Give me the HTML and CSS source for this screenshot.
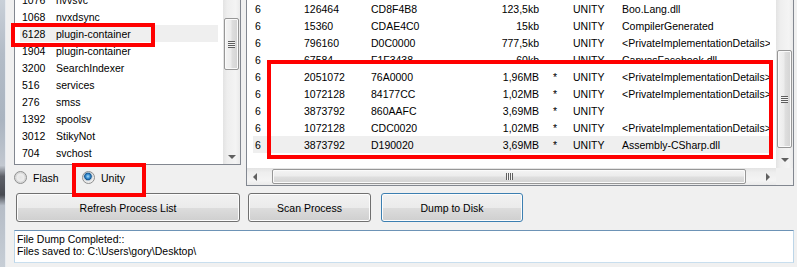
FILE: index.html
```html
<!DOCTYPE html>
<html lang="en">
  <head>
    <meta charset="UTF-8" />
    <title>Unity Dumper</title>
    <link rel="stylesheet" href="styles.css">
  </head>
  <body>
    <div class="desk">
      <!-- edge of the window behind -->
      <div class="backdrop"></div>

      <div class="form">
        <div class="panes">
          <div class="left-pane">
            <div class="proc-list">
              <div class="rows">
                <div class="row"><span class="pid">1076</span><span>nvvsvc</span></div>
                <div class="row"><span class="pid">1068</span><span>nvxdsync</span></div>
                <div class="row sel"><span class="pid">6128</span><span>plugin-container</span></div>
                <div class="row"><span class="pid">1904</span><span>plugin-container</span></div>
                <div class="row"><span class="pid">3200</span><span>SearchIndexer</span></div>
                <div class="row"><span class="pid">516</span><span>services</span></div>
                <div class="row"><span class="pid">276</span><span>smss</span></div>
                <div class="row"><span class="pid">1392</span><span>spoolsv</span></div>
                <div class="row"><span class="pid">3012</span><span>StikyNot</span></div>
                <div class="row"><span class="pid">704</span><span>svchost</span></div>
              </div>
              <div class="vscroll proc-scroll">
                <div class="thumb"><span class="grip"></span></div>
                <span class="arrow down"></span>
              </div>
            </div>

            <div class="radios">
              <label class="radio"><span class="dot"></span>Flash</label>
              <label class="radio checked"><span class="dot"></span>Unity</label>
            </div>
          </div>

          <div class="mod-list">
            <div class="rows">
              <div class="mrow"><span>6</span><span>126464</span><span>CD8F4B8</span><span class="size">123,5kb</span><span></span><span>UNITY</span><span>Boo.Lang.dll</span></div>
              <div class="mrow"><span>6</span><span>15360</span><span>CDAE4C0</span><span class="size">15kb</span><span></span><span>UNITY</span><span>CompilerGenerated</span></div>
              <div class="mrow"><span>6</span><span>796160</span><span>D0C0000</span><span class="size">777,5kb</span><span></span><span>UNITY</span><span>&lt;PrivateImplementationDetails&gt;</span></div>
              <div class="mrow"><span>6</span><span>67584</span><span>F1F3438</span><span class="size">60kb</span><span></span><span>UNITY</span><span>CanvasFacebook.dll</span></div>
              <div class="mrow"><span>6</span><span>2051072</span><span>76A0000</span><span class="size">1,96MB</span><span class="star">*</span><span>UNITY</span><span>&lt;PrivateImplementationDetails&gt;</span></div>
              <div class="mrow"><span>6</span><span>1072128</span><span>84177CC</span><span class="size">1,02MB</span><span class="star">*</span><span>UNITY</span><span>&lt;PrivateImplementationDetails&gt;</span></div>
              <div class="mrow"><span>6</span><span>3873792</span><span>860AAFC</span><span class="size">3,69MB</span><span class="star">*</span><span>UNITY</span><span></span></div>
              <div class="mrow"><span>6</span><span>1072128</span><span>CDC0020</span><span class="size">1,02MB</span><span class="star">*</span><span>UNITY</span><span>&lt;PrivateImplementationDetails&gt;</span></div>
              <div class="mrow sel"><span>6</span><span>3873792</span><span>D190020</span><span class="size">3,69MB</span><span class="star">*</span><span>UNITY</span><span>Assembly-CSharp.dll</span></div>
            </div>
            <div class="vscroll mod-scroll">
              <div class="thumb"><span class="grip"></span></div>
              <span class="arrow down"></span>
            </div>
            <div class="hscroll">
              <span class="arrow left"></span>
              <div class="hthumb"><span class="hgrip"></span></div>
              <span class="arrow right"></span>
            </div>
            <div class="corner"></div>
          </div>
        </div>

        <div class="actions">
          <div class="actions-left">
            <button class="btn wide">Refresh Process List</button>
          </div>
          <div class="actions-right">
            <button class="btn scan">Scan Process</button>
            <button class="btn dump focused">Dump to Disk</button>
          </div>
        </div>

        <div class="log">File Dump Completed::<br>Files saved to: C:\Users\gory\Desktop\</div>
      </div>

      <!-- red annotation boxes drawn over the screenshot -->
      <div class="mark mark-proc"></div>
      <div class="mark mark-unity"></div>
      <div class="mark mark-rows"></div>
    </div>
  </body>
</html>
```

FILE: styles.css
```css
body {
  margin: 0;
  background: #f0f0f0;
  font-family: "Liberation Sans", Arial, sans-serif;
  font-size: 10.5px;
  color: #000;
  overflow: hidden;
}

.desk {
  position: relative;
  display: flex;
  height: 267px;
}

.backdrop {
  width: 5px;
  flex: none;
  border-right: 1px solid #e6eaef;
  background: linear-gradient(
    to bottom,
    #c9d0d8 0,
    #b3bcc7 20%,
    #aab4c0 45%,
    #c2c8d0 62%,
    #5d6068 66%,
    #484b52 73%,
    #b5bcc6 77%,
    #c7ced6 100%
  );
}

.form {
  flex: 1;
  padding: 0 3px 0 8px;
  display: flex;
  flex-direction: column;
}

.panes {
  display: flex;
  gap: 5px;
  align-items: flex-start;
}

.left-pane {
  width: 227px;
  flex: none;
}

/* process list */
.proc-list {
  height: 165px;
  box-sizing: border-box;
  border: 1px solid #828790;
  border-top: none;
  background: #fff;
  display: flex;
  overflow: hidden;
}

.proc-list .rows {
  flex: 1;
  margin-top: -9px;
  padding: 0 5px;
}

.row {
  height: 17px;
  display: flex;
  align-items: center;
  padding-left: 2px;
  white-space: nowrap;
}

.row .pid {
  width: 34px;
}

.row.sel,
.mrow.sel {
  background: #efefef;
}

/* scrollbars */
.vscroll {
  width: 17px;
  flex: none;
  display: flex;
  flex-direction: column;
  align-items: center;
  background: linear-gradient(to right, #e3e3e3 0, #eeeeee 25%, #f4f4f4 75%, #eaeaea 100%);
}

.thumb {
  width: 15px;
  box-sizing: border-box;
  border: 1px solid #979797;
  border-radius: 2px;
  background: linear-gradient(to right, #f4f4f4 0, #ececec 45%, #dedede 55%, #d3d3d3 100%);
  box-shadow: inset 0 0 0 1px #fafafa;
  display: flex;
  align-items: center;
  justify-content: center;
}

.grip {
  width: 7px;
  height: 7px;
  background: repeating-linear-gradient(to bottom, #5e5e5e 0, #5e5e5e 1px, #f4f4f4 1px, #f4f4f4 2px);
}

.proc-scroll .thumb {
  margin-top: 18px;
  height: 52px;
}

.mod-scroll .thumb {
  margin-top: 50px;
  height: 98px;
}

.arrow {
  width: 0;
  height: 0;
  border: 4px solid transparent;
}

.arrow.down {
  margin-top: auto;
  margin-bottom: 5px;
  border-top: 4px solid #606060;
  border-bottom: none;
}

.mod-scroll .arrow.down {
  margin-bottom: 6px;
}

.arrow.left {
  border-right: 4px solid #606060;
  border-left: none;
  margin: 0 5px 0 6px;
}

.arrow.right {
  border-left: 4px solid #606060;
  border-right: none;
  margin: 0 6px 0 auto;
}

.hscroll {
  display: flex;
  align-items: center;
  background: linear-gradient(to bottom, #e3e3e3 0, #eeeeee 25%, #f4f4f4 75%, #eaeaea 100%);
}

.hthumb {
  margin-left: 10px;
  width: 474px;
  height: 15px;
  box-sizing: border-box;
  border: 1px solid #979797;
  border-radius: 2px;
  background: linear-gradient(to bottom, #f4f4f4 0, #ececec 45%, #dedede 55%, #d3d3d3 100%);
  box-shadow: inset 0 0 0 1px #fafafa;
  display: flex;
  align-items: center;
  justify-content: center;
}

.hgrip {
  width: 7px;
  height: 7px;
  background: repeating-linear-gradient(to right, #5e5e5e 0, #5e5e5e 1px, #f4f4f4 1px, #f4f4f4 2px);
}

.corner {
  background: #f0f0f0;
}

/* module list */
.mod-list {
  width: 548px;
  height: 186px;
  box-sizing: border-box;
  border: 1px solid #828790;
  border-top: none;
  background: #fff;
  display: grid;
  grid-template-columns: 1fr 17px;
  grid-template-rows: 1fr 17px;
  overflow: hidden;
}

.mod-list .rows {
  padding: 0 6px;
  overflow: hidden;
}

.mrow {
  height: 17px;
  display: grid;
  grid-template-columns: 49px 67px 109px 61px 32px 49px 1fr;
  align-items: center;
  padding-left: 2px;
  white-space: nowrap;
  overflow: hidden;
}

.mrow .size {
  text-align: right;
  padding-right: 2px;
}

.mrow .star {
  padding-left: 12px;
}

/* radio buttons */
.radios {
  display: flex;
  padding-top: 6px;
}

.radio {
  display: flex;
  align-items: center;
  gap: 6px;
  height: 13px;
}

.radio:first-child {
  width: 68px;
}

.dot {
  width: 13px;
  height: 13px;
  box-sizing: border-box;
  border-radius: 50%;
  border: 1px solid #8e8f8f;
  background: radial-gradient(circle at 50% 50%, #e4e4e4 0, #ececec 45%, #d5d5d5 60%, #f7f7f7 100%);
}

.radio.checked .dot {
  background: radial-gradient(circle at 45% 40%, #a9dcf7 0, #3c92d6 22%, #13558f 38%, #9fb7cc 44%, #e8e8e8 55%, #f7f7f7 100%);
}

/* buttons */
.actions {
  display: flex;
  gap: 5px;
  margin-top: 7px;
}

.actions-left {
  width: 227px;
  padding: 0 1px 0 2px;
  box-sizing: border-box;
}

.actions-right {
  display: flex;
  gap: 10px;
  padding-left: 2px;
}

.btn {
  height: 29px;
  box-sizing: border-box;
  border: 1px solid #707070;
  border-radius: 3px;
  background: linear-gradient(to bottom, #f2f2f2 0, #ebebeb 50%, #dddddd 50%, #cfcfcf 100%);
  box-shadow: inset 0 0 0 1px #fcfcfc;
  font-family: "Liberation Sans", Arial, sans-serif;
  font-size: 10.5px;
  color: #000;
  padding: 0;
}

.btn.wide {
  width: 224px;
}

.btn.scan {
  width: 123px;
}

.btn.dump {
  width: 142px;
}

.btn.focused {
  border-color: #3c7fb1;
  box-shadow: inset 0 0 0 1px #fcfcfc;
}

/* output box */
.log {
  margin-top: 8px;
  height: 33px;
  box-sizing: border-box;
  background: #fff;
  border: 1px solid #bcd5e8;
  border-top-color: #6d93b6;
  border-bottom-color: #c8deee;
  padding: 2px 2px;
  line-height: 12px;
  white-space: nowrap;
}

/* annotations */
.mark {
  position: absolute;
  box-sizing: border-box;
  border: 4px solid #f00;
}

.mark-proc {
  left: 11px;
  top: 23px;
  width: 144px;
  height: 24px;
}

.mark-unity {
  left: 72px;
  top: 163px;
  width: 74px;
  height: 34px;
}

.mark-rows {
  left: 267px;
  top: 60px;
  width: 506px;
  height: 99px;
}
```
